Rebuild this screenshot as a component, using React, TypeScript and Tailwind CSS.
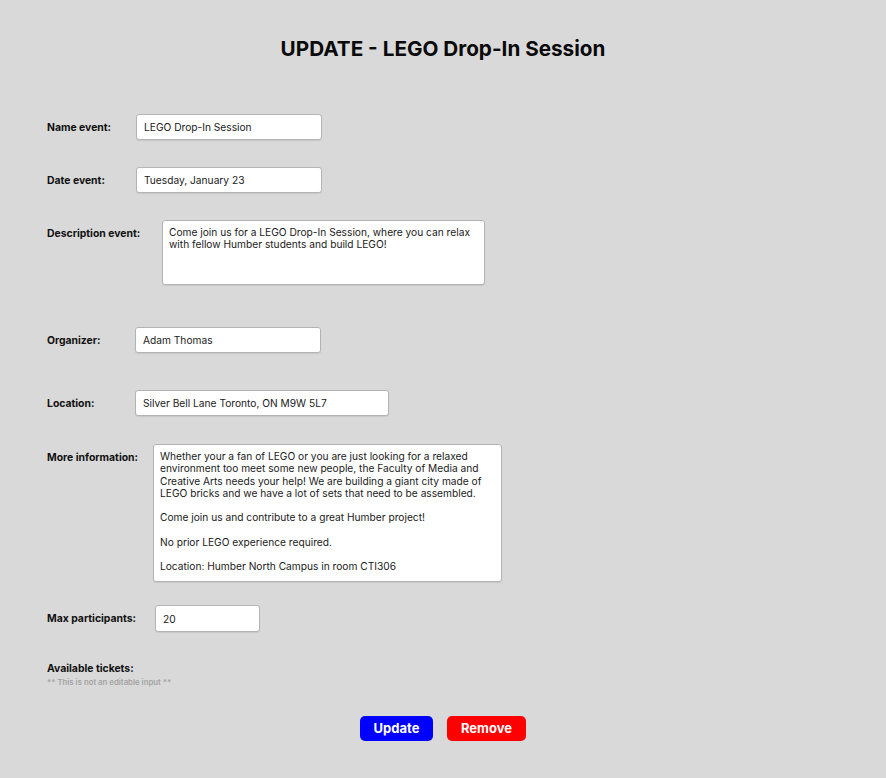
import { useState } from 'react'

const moreInfo = `Whether your a fan of LEGO or you are just looking for a relaxed environment too meet some new people, the Faculty of Media and Creative Arts needs your help! We are building a giant city made of LEGO bricks and we have a lot of sets that need to be assembled.

Come join us and contribute to a great Humber project!

No prior LEGO experience required.

Location: Humber North Campus in room CTI306`

const inputCls =
  'h-[26px] rounded-[3px] border border-[#b4b4b4] bg-white px-[7px] text-[10.2px] text-[#1a1a1a] outline-none shadow-[0_1px_1px_rgba(0,0,0,0.08)]'

const areaCls =
  'resize-none overflow-hidden rounded-[3px] border border-[#b4b4b4] bg-white px-[6px] pt-[5px] text-[10.2px] leading-[12.25px] text-[#1a1a1a] outline-none shadow-[0_1px_1px_rgba(0,0,0,0.08)]'

const labelCls = 'shrink-0 text-[10.4px] font-bold leading-[13px] text-[#111]'

export default function App() {
  const [name, setName] = useState('LEGO Drop-In Session')
  const [date, setDate] = useState('Tuesday, January 23')
  const [desc, setDesc] = useState(
    'Come join us for a LEGO Drop-In Session, where you can relax with fellow Humber students and build LEGO!'
  )
  const [organizer, setOrganizer] = useState('Adam Thomas')
  const [location, setLocation] = useState('Silver Bell Lane Toronto, ON M9W 5L7')
  const [info, setInfo] = useState(moreInfo)
  const [max, setMax] = useState('20')

  return (
    <div className="min-h-[778px] bg-[#d9d9d9] pb-10 font-['Inter',sans-serif]">
      <div className="pt-[35px] text-center">
        <h1 className="text-[20.7px] font-bold leading-[28px] text-[#0a0a0a]">UPDATE - LEGO Drop-In Session</h1>
      </div>

      <form className="flex flex-col pl-[47px]" onSubmit={(e) => e.preventDefault()}>
        <div className="mt-[51px] flex items-center">
          <label className={`${labelCls} w-[89px]`}>Name event:</label>
          <input className={`${inputCls} w-[186px]`} value={name} onChange={(e) => setName(e.target.value)} />
        </div>

        <div className="mt-[27px] flex items-center">
          <label className={`${labelCls} w-[89px]`}>Date event:</label>
          <input className={`${inputCls} w-[186px]`} value={date} onChange={(e) => setDate(e.target.value)} />
        </div>

        <div className="mt-[27px] flex items-start">
          <label className={`${labelCls} mt-[7px] w-[115px]`}>Description event:</label>
          <textarea className={`${areaCls} h-[65px] w-[323px]`} value={desc} onChange={(e) => setDesc(e.target.value)} />
        </div>

        <div className="mt-[42px] flex items-center">
          <label className={`${labelCls} w-[88px]`}>Organizer:</label>
          <input className={`${inputCls} w-[186px]`} value={organizer} onChange={(e) => setOrganizer(e.target.value)} />
        </div>

        <div className="mt-[37px] flex items-center">
          <label className={`${labelCls} w-[88px]`}>Location:</label>
          <input className={`${inputCls} w-[254px]`} value={location} onChange={(e) => setLocation(e.target.value)} />
        </div>

        <div className="mt-[28px] flex items-start">
          <label className={`${labelCls} mt-[7px] w-[106px]`}>More information:</label>
          <textarea className={`${areaCls} h-[138px] w-[349px]`} value={info} onChange={(e) => setInfo(e.target.value)} />
        </div>

        <div className="mt-[23px] flex items-center">
          <label className={`${labelCls} w-[108px]`}>Max participants:</label>
          <input className={`${inputCls} h-[27px] w-[105px]`} value={max} onChange={(e) => setMax(e.target.value)} />
        </div>

        <div className="mt-[30px]">
          <p className={labelCls}>Available tickets:</p>
          <p className="mt-[2px] text-[7.8px] font-semibold leading-[10px] text-[#a3a3a3]">** This is not an editable input **</p>
        </div>

        <div className="mt-[29px] flex justify-center gap-[14px] pr-[47px]">
          <button type="submit" className="h-[25px] w-[73px] rounded-[5px] bg-[#0000ff] text-[13px] font-bold text-white">
            Update
          </button>
          <button type="button" className="h-[25px] w-[79px] rounded-[5px] bg-[#ff0000] text-[13px] font-bold text-white">
            Remove
          </button>
        </div>
      </form>
    </div>
  )
}
